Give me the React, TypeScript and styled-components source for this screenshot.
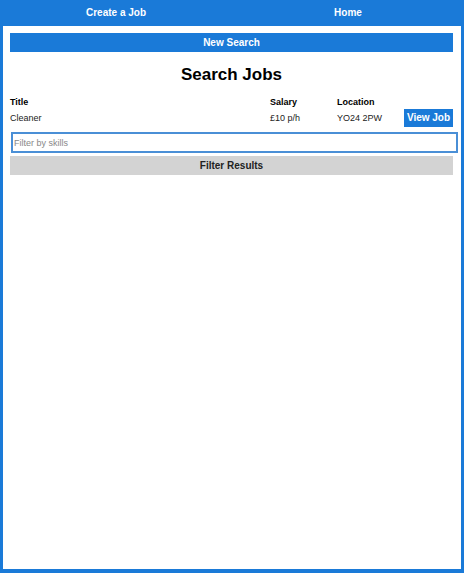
import styled, { createGlobalStyle } from "styled-components";

const blue = "#1a7ad8";

const GlobalStyle = createGlobalStyle`
  html, body {
    margin: 0;
    padding: 0;
  }
  body {
    font-family: "Liberation Sans", Arial, sans-serif;
  }
`;

const Frame = styled.div`
  box-sizing: border-box;
  min-height: 573px;
  display: flex;
  flex-direction: column;
  background: ${blue};
  padding: 0 3px 4px 3px;
`;

const Nav = styled.nav`
  display: flex;
  height: 26px;
  margin: 0 -3px;
`;

const NavLink = styled.a`
  flex: 1;
  display: flex;
  align-items: center;
  justify-content: center;
  color: #fff;
  font-weight: bold;
  font-size: 10px;
  text-decoration: none;
  padding-bottom: 2px;
`;

const Main = styled.main`
  flex: 1;
  background: #fff;
  padding: 7px 8px 0 7px;
`;

const Bar = styled.button<{ $tone: "blue" | "grey" }>`
  display: block;
  width: 100%;
  height: 19px;
  border: none;
  margin: 0;
  padding: 0;
  font-family: inherit;
  font-weight: bold;
  font-size: 10px;
  background: ${(p) => (p.$tone === "blue" ? blue : "#d3d3d3")};
  color: ${(p) => (p.$tone === "blue" ? "#fff" : "#222")};
`;

const Heading = styled.h1`
  margin: 12px 0 0 0;
  height: 22px;
  line-height: 22px;
  text-align: center;
  font-size: 17px;
  font-weight: bold;
  color: #000;
`;

const Table = styled.div`
  display: grid;
  grid-template-columns: 260px 67px 67px 1fr;
  margin-top: 10px;
  font-size: 9px;
  color: #222;
`;

const HeadCell = styled.div`
  font-weight: bold;
  color: #000;
  height: 12px;
  line-height: 12px;
`;

const Cell = styled.div`
  display: flex;
  align-items: center;
  height: 19px;
  margin-top: 0;
`;

const ViewButton = styled.button`
  width: 49px;
  height: 18px;
  border: none;
  padding: 0;
  background: ${blue};
  color: #fff;
  font-family: inherit;
  font-weight: bold;
  font-size: 10px;
`;

const FilterInput = styled.input`
  display: block;
  box-sizing: content-box;
  width: calc(100% - 2px);
  height: 17px;
  margin: 5px 0 0 1px;
  padding: 0 1px;
  border: 2px solid #4a8fd6;
  font-family: inherit;
  font-size: 9px;
  color: #222;
  outline: none;
  &::placeholder {
    color: #888;
  }
`;

const FilterBar = styled(Bar)`
  margin-top: 3px;
`;

export default function App() {
  return (
    <>
      <GlobalStyle />
      <Frame>
        <Nav>
          <NavLink href="#">Create a Job</NavLink>
          <NavLink href="#">Home</NavLink>
        </Nav>
        <Main>
          <Bar $tone="blue">New Search</Bar>
          <Heading>Search Jobs</Heading>
          <Table>
            <HeadCell>Title</HeadCell>
            <HeadCell>Salary</HeadCell>
            <HeadCell>Location</HeadCell>
            <HeadCell />
            <Cell>Cleaner</Cell>
            <Cell>£10 p/h</Cell>
            <Cell>YO24 2PW</Cell>
            <Cell>
              <ViewButton>View Job</ViewButton>
            </Cell>
          </Table>
          <FilterInput placeholder="Filter by skills" />
          <FilterBar $tone="grey">Filter Results</FilterBar>
        </Main>
      </Frame>
    </>
  );
}
